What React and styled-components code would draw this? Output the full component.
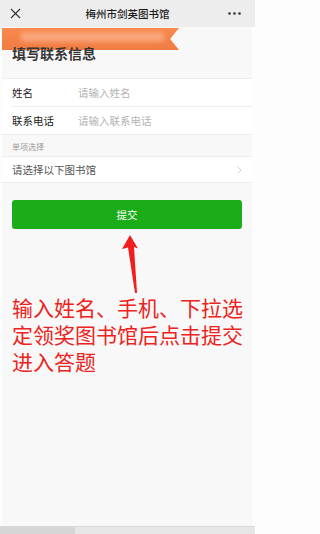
import React from 'react';
import styled, { createGlobalStyle } from 'styled-components';

const GlobalStyle = createGlobalStyle`
	html, body {
		margin: 0;
		padding: 0;
		background: #fdfdfd;
	}
	body {
		font-family: "Noto Sans CJK SC", "Noto Sans", sans-serif;
	}
`;

const App = () => (
	<Page>
		<GlobalStyle />
		<NavBar>
			<NavIcon>
				<svg width="11" height="11" viewBox="0 0 11 11">
					<path d="M1 1 L10 10 M10 1 L1 10" stroke="#333" strokeWidth="1.1" fill="none" />
				</svg>
			</NavIcon>
			<NavTitle>梅州市剑英图书馆</NavTitle>
			<NavMore>
				<svg width="13" height="3" viewBox="0 0 13 3">
					<circle cx="1.5" cy="1.5" r="1.3" fill="#333" />
					<circle cx="6.5" cy="1.5" r="1.3" fill="#333" />
					<circle cx="11.5" cy="1.5" r="1.3" fill="#333" />
				</svg>
			</NavMore>
		</NavBar>

		<Content>
			<Hero>
				<Ribbon>
					<RibbonShine />
				</Ribbon>
				<Title>填写联系信息</Title>
			</Hero>

			<Group>
				<Row>
					<Label>姓名</Label>
					<Placeholder>请输入姓名</Placeholder>
				</Row>
				<Row last>
					<Label>联系电话</Label>
					<Placeholder>请输入联系电话</Placeholder>
				</Row>
			</Group>

			<GroupTitle>单项选择</GroupTitle>

			<Group>
				<SelectRow>
					<span>请选择以下图书馆</span>
					<Chevron viewBox="0 0 5 8" width="5" height="8">
						<path d="M0.6 0.6 L4 4 L0.6 7.4" stroke="#c8c8cd" strokeWidth="0.9" fill="none" />
					</Chevron>
				</SelectRow>
			</Group>

			<SubmitButton>提交</SubmitButton>

			<Arrow width="30" height="60" viewBox="0 0 30 60">
				<path d="M9 1 L1 15 L7 13.5 L14 59 L16 59 L13 13 L17 14.5 Z" fill="#f01e1e" />
			</Arrow>

			<Hint>输入姓名、手机、下拉选定领奖图书馆后点击提交进入答题</Hint>
		</Content>

		<BottomBar>
			<ScrollThumb />
		</BottomBar>
	</Page>
);

const Page = styled.div`
	width: 255px;
	height: 534px;
	display: flex;
	flex-direction: column;
	overflow: hidden;
`;

const NavBar = styled.header`
	height: 27px;
	flex-shrink: 0;
	display: grid;
	grid-template-columns: 40px 1fr 40px;
	align-items: center;
	background: #ededed;
`;

const NavIcon = styled.div`
	display: flex;
	padding-left: 10px;
`;

const NavTitle = styled.div`
	text-align: center;
	font-size: 10.5px;
	font-weight: 500;
	color: #1c1c1c;
`;

const NavMore = styled.div`
	display: flex;
	justify-content: flex-end;
	padding-right: 14px;
`;

const Content = styled.main`
	flex: 1;
	margin: 0 3px 0 2px;
	background: #f8f8f8;
	display: flex;
	flex-direction: column;
`;

const Hero = styled.div`
	position: relative;
	height: 51px;
	padding: 17px 0 0 10px;
	box-sizing: border-box;
`;

const Ribbon = styled.div`
	position: absolute;
	left: 0;
	top: 1px;
	width: 177px;
	height: 22px;
	background: linear-gradient(#f8894f, #f07c42);
	clip-path: polygon(0 0, 100% 0, 95% 50%, 100% 100%, 0 100%);
`;

const RibbonShine = styled.div`
	position: absolute;
	left: 18px;
	top: 4px;
	width: 145px;
	height: 10px;
	border-radius: 5px;
	background: rgba(255, 190, 160, 0.55);
	filter: blur(2px);
`;

const Title = styled.h1`
	position: relative;
	margin: 0;
	font-size: 14px;
	font-weight: bold;
	line-height: 18px;
	color: #353535;
`;

const Group = styled.div`
	background: #fff;
	border-top: 1px solid #ececec;
	border-bottom: 1px solid #ececec;
`;

const Row = styled.div`
	display: flex;
	align-items: center;
	height: 27px;
	margin-left: 10px;
	border-bottom: ${(p) => (p.last ? 'none' : '1px solid #ececec')};
	font-size: 10.5px;
`;

const Label = styled.span`
	width: 66px;
	color: #222;
`;

const Placeholder = styled.span`
	color: #b2b2b2;
`;

const GroupTitle = styled.div`
	padding: 6px 10px 3px;
	font-size: 8px;
	line-height: 12px;
	color: #9a9a9a;
`;

const SelectRow = styled.div`
	display: flex;
	align-items: center;
	justify-content: space-between;
	height: 25px;
	padding: 0 10px;
	font-size: 10.5px;
	color: #555;
`;

const Chevron = styled.svg`
	display: block;
`;

const SubmitButton = styled.button`
	margin: 17px 10px 0;
	height: 29px;
	border: none;
	border-radius: 3px;
	background: #1aad19;
	color: #fff;
	font-family: inherit;
	font-size: 10.5px;
`;

const Arrow = styled.svg`
	display: block;
	margin: 5px 0 0 119px;
`;

const Hint = styled.p`
	margin: 0 0 0 10px;
	width: 233px;
	font-size: 21px;
	line-height: 27px;
	color: #ec2320;
`;

const BottomBar = styled.div`
	height: 7px;
	flex-shrink: 0;
	background: #e6e6e6;
	border-top: 1px solid #d9d9d9;
`;

const ScrollThumb = styled.div`
	width: 75px;
	height: 100%;
	background: #d6d6d6;
`;

export default App;
